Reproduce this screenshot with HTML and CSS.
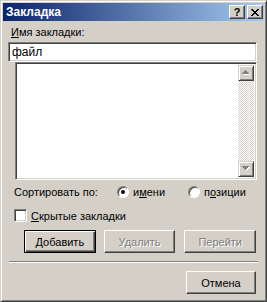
FILE: index.html
```html
<!DOCTYPE html>
<html>
<head>
  <title>Закладка</title>
  <link rel="stylesheet" href="styles.css">
</head>
<body>
  <div class="window">
    <div class="titlebar">
      <span class="title">Закладка</span>
      <button class="cap-btn help">?</button>
      <button class="cap-btn close">
        <svg width="8" height="7" viewBox="0 0 8 7"><path d="M0 0h2v1h1v1h2v-1h1v-1h2v1h-1v1h-1v1h-1v1h1v1h1v1h1v1h-2v-1h-1v-1h-2v1h-1v1h-2v-1h1v-1h1v-1h1v-1h-1v-1h-1z" fill="#000"/></svg>
      </button>
    </div>

    <div class="content">
      <div class="label"><u>И</u>мя закладки:</div>
      <div class="textbox">файл</div>
      <div class="listbox">
        <div class="list-area"></div>
        <div class="scrollbar">
          <div class="sb-btn">
            <svg width="8" height="6" viewBox="0 0 8 6"><path d="M3 0h1v1h1v1h1v1h1v1h-7v-1h1v-1h1v-1h1z" fill="#fff" transform="translate(1,1)"/><path d="M3 0h1v1h1v1h1v1h1v1h-7v-1h1v-1h1v-1h1z" fill="#808080"/></svg>
          </div>
          <div class="sb-track"></div>
          <div class="sb-btn">
            <svg width="8" height="6" viewBox="0 0 8 6"><path d="M0 0h7v1h-1v1h-1v1h-1v1h-1v-1h-1v-1h-1v-1h-1z" fill="#fff" transform="translate(1,1)"/><path d="M0 0h7v1h-1v1h-1v1h-1v1h-1v-1h-1v-1h-1v-1h-1z" fill="#808080"/></svg>
          </div>
        </div>
      </div>

      <div class="sort-row">
        <span class="sort-label">Сортировать по:</span>
        <span class="radio checked"></span>
        <span class="radio-text">и<u>м</u>ени</span>
        <span class="radio second"></span>
        <span class="radio-text">п<u>о</u>зиции</span>
      </div>

      <div class="check-row">
        <span class="checkbox"></span>
        <span class="check-text"><u>С</u>крытые закладки</span>
      </div>

      <div class="button-row">
        <button class="btn default"><u>Д</u>обавить</button>
        <button class="btn disabled">Удалить</button>
        <button class="btn disabled last">Перейти</button>
      </div>

      <div class="separator"></div>

      <div class="bottom-row">
        <button class="btn">Отмена</button>
      </div>
    </div>
  </div>
</body>
</html>
```

FILE: styles.css
```css
body {
  margin: 0;
  padding: 0;
  background-color: #d4d0c8;
  font-family: "Liberation Sans", Arial, sans-serif;
  font-size: 11px;
  color: #000;
}
.window {
  width: 267px;
  height: 302px;
  box-sizing: border-box;
  border: 1px solid;
  border-color: #d4d0c8 #404040 #404040 #d4d0c8;
  box-shadow: inset 1px 1px #fff, inset -1px -1px #808080;
  padding: 2px;
  background-color: #d4d0c8;
}
.titlebar {
  height: 18px;
  display: flex;
  align-items: center;
  background: linear-gradient(to right, #0a246a, #a6caf0);
}
.title {
  flex: 1;
  color: #fff;
  font-weight: bold;
  font-size: 12px;
  padding-left: 3px;
}
.cap-btn {
  width: 16px;
  height: 14px;
  margin: 0 2px 0 0;
  padding: 0;
  box-sizing: border-box;
  background-color: #d4d0c8;
  border: 1px solid;
  border-color: #fff #404040 #404040 #fff;
  box-shadow: inset -1px -1px #808080;
  font-family: "Liberation Sans", Arial, sans-serif;
  font-weight: bold;
  font-size: 11px;
  line-height: 11px;
  display: flex;
  align-items: center;
  justify-content: center;
}
.cap-btn.close {
  margin-right: 1px;
}
.content {
  padding: 0 0 0 5px;
}
.label {
  margin: 4px 0 0 3px;
  height: 15px;
  line-height: 15px;
}
.textbox {
  margin-top: 2px;
  width: 249px;
  height: 20px;
  box-sizing: border-box;
  background-color: #fff;
  border: 1px solid;
  border-color: #808080 #fff #fff #808080;
  box-shadow: inset 1px 1px #404040, inset -1px -1px #d4d0c8;
  padding: 2px 0 0 3px;
  font-size: 12px;
  line-height: 14px;
}
.listbox {
  margin-left: 7px;
  width: 242px;
  height: 118px;
  box-sizing: border-box;
  display: flex;
  background-color: #fff;
  border: 1px solid;
  border-color: #808080 #fff #fff #808080;
  box-shadow: inset 1px 1px #404040, inset -1px -1px #d4d0c8;
  padding: 2px;
}
.list-area {
  flex: 1;
}
.scrollbar {
  width: 16px;
  display: flex;
  flex-direction: column;
}
.sb-btn {
  width: 16px;
  height: 16px;
  box-sizing: border-box;
  background-color: #d4d0c8;
  border: 1px solid;
  border-color: #d4d0c8 #404040 #404040 #d4d0c8;
  box-shadow: inset 1px 1px #fff, inset -1px -1px #808080;
  display: flex;
  align-items: center;
  justify-content: center;
}
.sb-track {
  flex: 1;
  background-color: #fff;
  background-image: repeating-conic-gradient(#d4d0c8 0 25%, #fff 0 50%);
  background-size: 2px 2px;
}
.sort-row {
  display: flex;
  align-items: center;
  margin: 5px 0 0 6px;
  height: 14px;
}
.sort-label {
  width: 103px;
}
.radio {
  width: 12px;
  height: 12px;
  box-sizing: border-box;
  border-radius: 50%;
  border: 1px solid;
  border-color: #808080 #fff #fff #808080;
  box-shadow: inset 1px 1px #404040;
  background-color: #fff;
  position: relative;
}
.radio.checked::after {
  content: "";
  position: absolute;
  left: 3px;
  top: 3px;
  width: 4px;
  height: 4px;
  border-radius: 50%;
  background-color: #000;
}
.radio.second {
  margin-left: 23px;
}
.radio-text {
  margin-left: 4px;
}
.check-row {
  display: flex;
  align-items: center;
  margin: 10px 0 0 6px;
  height: 13px;
}
.checkbox {
  width: 13px;
  height: 13px;
  box-sizing: border-box;
  background-color: #fff;
  border: 1px solid;
  border-color: #808080 #fff #fff #808080;
  box-shadow: inset 1px 1px #404040, inset -1px -1px #d4d0c8;
}
.check-text {
  margin-left: 4px;
}
.button-row {
  display: flex;
  margin: 8px 0 0 16px;
}
.btn {
  width: 73px;
  height: 23px;
  box-sizing: border-box;
  padding: 0;
  margin-right: 8px;
  background-color: #d4d0c8;
  border: 1px solid;
  border-color: #fff #404040 #404040 #fff;
  box-shadow: inset -1px -1px #808080;
  font-family: "Liberation Sans", Arial, sans-serif;
  font-size: 11px;
  color: #000;
}
.btn.last {
  margin-left: 1px;
}
.btn.default {
  border: 1px solid #000;
  box-shadow: inset 1px 1px #fff, inset -1px -1px #404040, inset -2px -2px #808080;
}
.btn.disabled {
  color: #808080;
  text-shadow: 1px 1px #fff;
}
.separator {
  margin: 8px 0 0 1px;
  width: 249px;
  height: 0;
  border-top: 1px solid #808080;
  border-bottom: 1px solid #fff;
}
.bottom-row {
  display: flex;
  margin: 8px 0 0 178px;
}
```
